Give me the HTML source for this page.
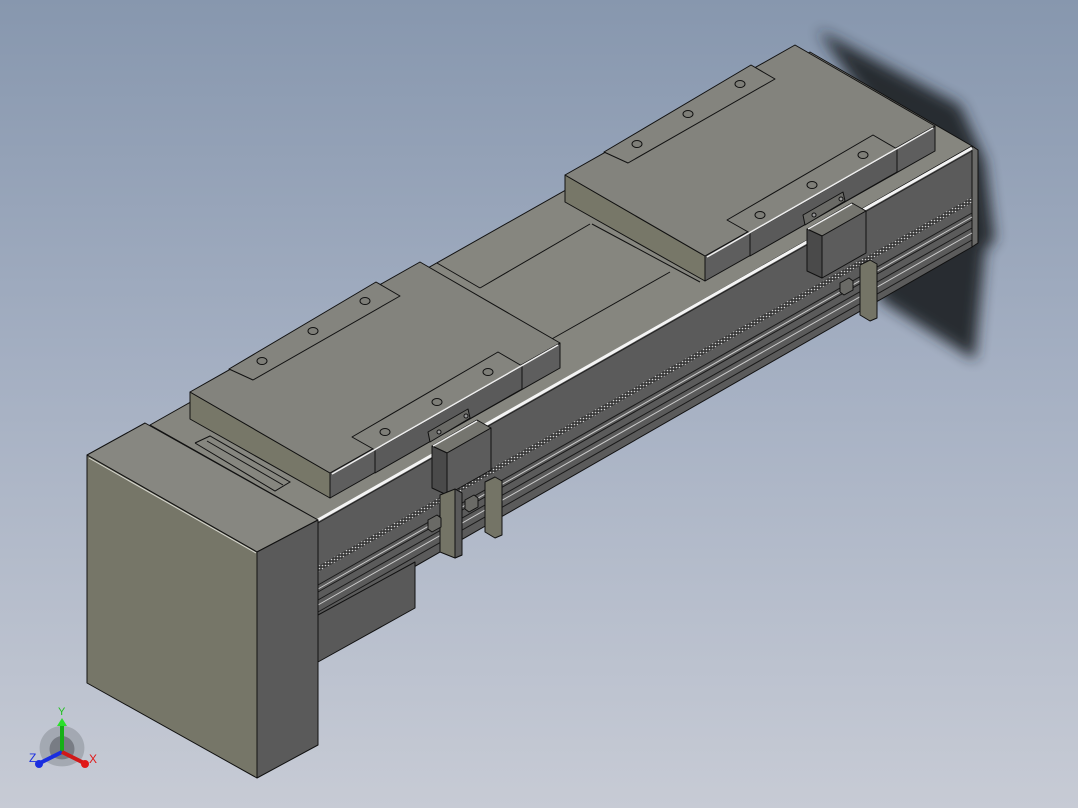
<!DOCTYPE html>
<html><head><meta charset="utf-8"><style>
html,body{margin:0;padding:0;width:1078px;height:808px;overflow:hidden}
body{background:linear-gradient(180deg,#8797ae 0%,#a4afc2 45%,#c7cbd5 100%)}
svg{position:absolute;left:0;top:0}
text{font-family:"Liberation Sans",sans-serif}
</style></head><body>
<svg width="1078" height="808" viewBox="0 0 1078 808">
<defs>
<filter id="bl" x="-30%" y="-30%" width="160%" height="160%"><feGaussianBlur stdDeviation="7"/></filter>
<pattern id="dots" width="3" height="3" patternUnits="userSpaceOnUse"><rect width="3" height="3" fill="#3a3a3a"/><circle cx="1.5" cy="1.5" r="0.8" fill="#cfcfcf"/></pattern>
</defs>
<polygon points="818,30 960,105 985,160 995,240 985,250 975,360 880,300 870,240 900,200 880,120" fill="#23262b" filter="url(#bl)" opacity="0.95"/>

<g stroke="#111" stroke-width="1" stroke-linejoin="round">
<polygon points="150,425 810,52 972,146 318,520" fill="#86867f"/>
<polygon points="318,520 972,146 972,247 318,622" fill="#5b5b5b"/>
<polygon points="318,615 415,562 415,608 318,662" fill="#595959"/>
<polygon points="972,146 978,150 978,243 972,247" fill="#6a6a68"/>
</g>
<polygon points="318,566 972,197 972,203 318,572" fill="url(#dots)"/>
<g stroke="#1a1a1a" stroke-width="1" fill="none">
<line x1="318" y1="585" x2="972" y2="213"/>
<line x1="318" y1="592" x2="972" y2="220"/>
<line x1="318" y1="600" x2="972" y2="228"/>
<line x1="318" y1="612" x2="972" y2="240"/>
</g>
<g stroke="#e8e8e8" stroke-width="1" fill="none" opacity="0.8">
<line x1="318" y1="589" x2="972" y2="217"/>
<line x1="318" y1="605" x2="972" y2="233"/>
</g>
<line x1="318" y1="520" x2="972" y2="148" stroke="#f4f4f4" stroke-width="3"/>
<line x1="318" y1="523" x2="972" y2="151" stroke="#222" stroke-width="1"/>
<g stroke="#111" stroke-width="1" fill="none">
<line x1="437" y1="263" x2="480" y2="288"/>
<line x1="480" y1="288" x2="590" y2="224"/>
<line x1="550" y1="340" x2="670" y2="272"/>
<line x1="592" y1="224" x2="700" y2="282"/>
<polyline points="195,443 210,436 290,482 275,491 195,443"/>
<line x1="207" y1="441" x2="283" y2="485"/>
</g>

<g id="car">
<g stroke="#111" stroke-width="1" stroke-linejoin="round">
<polygon points="190,392 330,473 330,498 190,419" fill="#777768"/>
<polygon points="330,473 560,343 560,368 330,498" fill="#5e5e5e"/>
<polygon points="190,392 420,262 560,343 330,473" fill="#83837d"/>
<polygon points="229,369 376,282 400,296 253,380" fill="#84847e"/>
<polygon points="352,437 498,352 522,366 375,450" fill="#84847e"/>
<polygon points="375,450 522,366 522,389 375,473" fill="#5a5a5a"/>
</g>
<line x1="332" y1="474" x2="558" y2="345" stroke="#eee" stroke-width="1.5"/>
<g fill="#7e7e78" stroke="#111"><ellipse cx="262" cy="361" rx="5" ry="3.5"/><ellipse cx="313" cy="331" rx="5" ry="3.5"/><ellipse cx="365" cy="301" rx="5" ry="3.5"/><ellipse cx="385" cy="432" rx="5" ry="3.5"/><ellipse cx="437" cy="402" rx="5" ry="3.5"/><ellipse cx="488" cy="372" rx="5" ry="3.5"/></g>
</g>
<use href="#car" transform="translate(375,-217)"/>

<g id="clamp" stroke="#111" stroke-width="1" stroke-linejoin="round">
<polygon points="428,432 468,409 470,418 430,442" fill="#6a6a66"/>
<circle cx="439" cy="432" r="2" fill="#999"/><circle cx="466" cy="416" r="2" fill="#999"/>
<polygon points="432,446 477,420 491,428 447,453" fill="#75756f"/>
<polygon points="447,453 491,428 491,470 447,495" fill="#5c5c5c"/>
<polygon points="432,446 447,453 447,495 432,488" fill="#4a4a4a"/>
<polygon points="485,482 495,477 502,481 502,535 495,538 485,532" fill="#747466"/>
<polygon points="465,500 474,495 478,498 478,507 469,512 465,509" fill="#6a6a66"/>
<line x1="433" y1="446" x2="477" y2="421" stroke="#eee" stroke-width="1.5"/>
</g>
<g stroke="#111" stroke-width="1" stroke-linejoin="round">
<polygon points="440,495 455,489 462,493 462,555 455,558 440,552" fill="#747466"/>
<polygon points="455,489 462,493 462,555 455,558" fill="#5a5a5a"/>
<polygon points="428,520 437,515 441,518 441,527 432,532 428,529" fill="#6a6a66"/>
</g>
<use href="#clamp" transform="translate(375,-217)"/>

<g stroke="#111" stroke-width="1" stroke-linejoin="round">
<polygon points="87,455 145,423 318,520 257,552" fill="#878781"/>
<polygon points="87,455 257,552 257,778 87,683" fill="#767668"/>
<polygon points="257,552 318,520 318,745 257,778" fill="#5a5a5a"/>
</g>
<line x1="89" y1="458" x2="256" y2="553" stroke="#d8d8d0" stroke-width="1"/>

<g transform="translate(62,752)">
<path d="M-20,6 A22,22 0 0 1 0,-26 A22,22 0 0 1 20,6 A28,28 0 0 1 -20,6Z" fill="#8a8f98" opacity="0.55"/>
<path d="M-11,3 A13,13 0 0 1 0,-16 A13,13 0 0 1 11,3 A16,16 0 0 1 -11,3Z" fill="#5b5f66" opacity="0.6"/>
<line x1="0" y1="0" x2="0" y2="-28" stroke="#16b016" stroke-width="4"/>
<polygon points="-5,-26 5,-26 0,-34" fill="#2be02b"/>
<line x1="0" y1="0" x2="-22" y2="11" stroke="#1a2ee0" stroke-width="4"/>
<circle cx="-23" cy="12" r="4" fill="#1a2ee0"/>
<line x1="0" y1="0" x2="22" y2="11" stroke="#d01818" stroke-width="4"/>
<circle cx="23" cy="12" r="4" fill="#e01818"/>
<text x="-4" y="-37" font-size="11" fill="#1ec01e">Y</text>
<text x="-33" y="10" font-size="12" fill="#1a2ee0">Z</text>
<text x="27" y="11" font-size="12" fill="#e01818">X</text>
</g>
</svg>
</body></html>
